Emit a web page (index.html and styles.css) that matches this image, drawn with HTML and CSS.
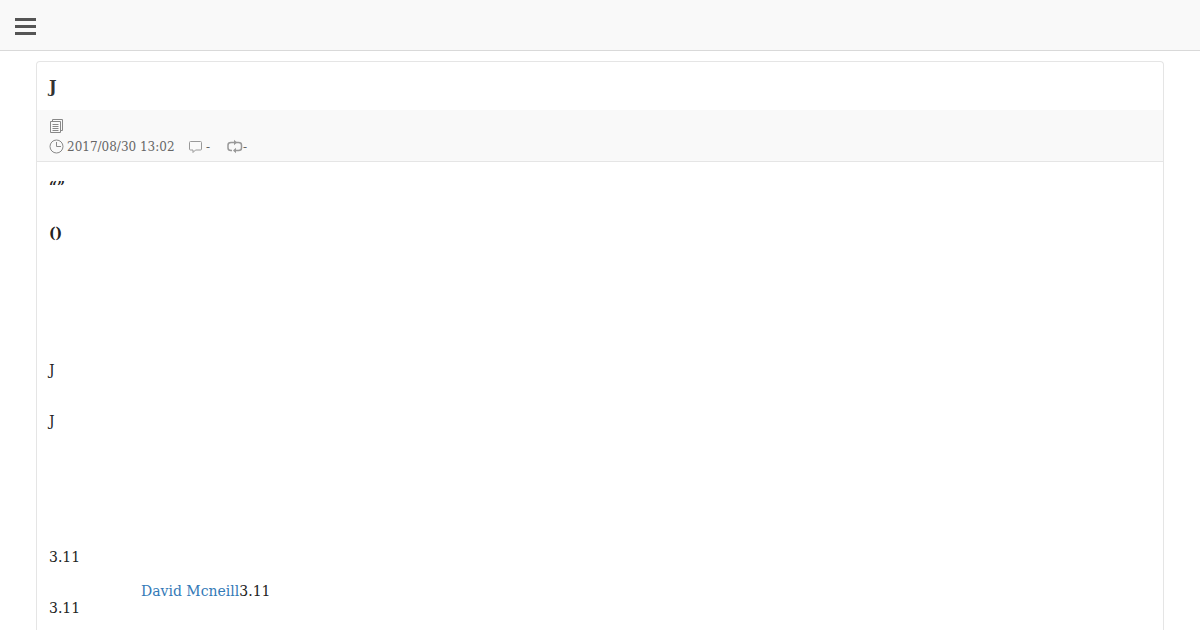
FILE: index.html
```
<!DOCTYPE html>
<html lang="ja">
<head>
  <meta charset="UTF-8" />
  <title>J</title>
  <link rel="stylesheet" href="styles.css">
</head>
<body>
  <header class="navbar">
    <button class="menu-btn" aria-label="Menu">
      <span></span>
      <span></span>
      <span></span>
    </button>
  </header>

  <article class="panel">
    <h1 class="title">J</h1>
    <div class="meta">
      <div class="meta-row">
        <svg width="15" height="16" viewBox="0 0 15 16">
          <path d="M3.500 3.500V1.500h10v11H11.500M1.500 3.500h10v11h-10zM3.500 6.500h6M3.500 8.500h6M3.500 10.500h6M3.500 12.500h6" />
        </svg>
      </div>
      <div class="meta-row">
        <svg width="15" height="16" viewBox="0 0 15 16">
          <circle cx="7.500" cy="8.500" r="6.500" />
          <path d="M7.500 4v4.500h4.500" />
        </svg>
        <span class="date">2017/08/30 13:02</span>
        <svg class="icon-comment" width="15" height="16" viewBox="0 0 15 16">
          <path d="M2.500 3.500h10q1 0 1 1v6.500q0 1-1 1H7.500L5 14.500V12H2.500q-1 0-1-1V4.500q0-1 1-1z" />
        </svg>
        <span class="comments">-</span>
        <svg class="icon-repost" width="16" height="16" viewBox="0 0 16 16">
          <path d="M5 12.500H4q-3 0-3-2.500V7q0-2.500 3-2.500h4M8 4.500h3.500q3 0 3 2.500v3q0 2.500-3 2.500H7M10.500 4.500h1" />
          <path class="arrow" d="M7 1.800v5.400L10 4.500zM9 9.800v5.400L6 12.500z" />
        </svg>
        <span>-</span>
      </div>
    </div>
    <div class="content">
      <h2 class="lead">“”</h2>
      <h2 class="lead">()</h2>
      <p class="intro">J</p>
      <p class="second">J</p>
      <p class="third">3.11</p>
      <p class="credit"><a href="#">David Mcneill</a>3.11</p>
      <p>3.11</p>
    </div>
  </article>
</body>
</html>
```
FILE: styles.css
```
* {
  box-sizing: border-box;
}
body {
  display: flex;
  flex-direction: column;
  min-height: 100vh;
  margin: 0;
  font-family: "DejaVu Serif", serif;
  font-size: 14px;
  line-height: 17px;
  color: #222;
  background: #fff;
}
.navbar {
  height: 51px;
  padding: 18px 15px;
  background: #f9f9f9;
  border-bottom: 1px solid #d9d9d9;
}
.menu-btn {
  display: flex;
  flex-direction: column;
  gap: 4px;
  width: 21px;
  padding: 0;
  border: none;
  background: none;
  cursor: pointer;
}
.menu-btn span {
  width: 21px;
  height: 3px;
  background: #555;
}

/* Article */
.panel {
  flex: 1;
  margin: 10px 36px 0;
  border: 1px solid #e5e5e5;
  border-bottom: none;
  border-radius: 4px 4px 0 0;
}
.title {
  height: 48px;
  margin: 0;
  padding: 14px 12px 0;
  font-size: 16px;
  line-height: 22px;
  color: #333;
}
.meta {
  height: 52px;
  padding: 6px 12px 0;
  font-size: 12px;
  line-height: 18px;
  color: #666;
  background: #f9f9f9;
  border-bottom: 1px solid #e5e5e5;
}
.meta-row {
  display: flex;
  align-items: center;
  height: 20px;
}
.meta-row span {
  padding-top: 2px;
}
.meta svg {
  fill: none;
  stroke: #888;
  stroke-width: 1;
}
.meta .icon-comment {
  stroke: #999;
}
.meta .icon-repost {
  stroke: #999;
  stroke-width: 1.5;
}
.icon-repost .arrow {
  fill: #999;
  stroke: none;
}
.date {
  width: 121px;
  margin-left: 3px;
}
.comments {
  width: 21px;
  margin-left: 3px;
}
.content {
  padding: 17px 12px 0;
}
.content p {
  margin: 0;
}
.lead {
  height: 17px;
  margin: 0 0 29px;
  font-size: 14px;
  line-height: 17px;
}
.content .intro {
  margin-top: 120px;
}
.content .second {
  margin-top: 34px;
}
.content .third {
  margin-top: 119px;
}
.content .credit {
  margin-top: 17px;
  padding-left: 92px;
}
.credit a {
  color: #337ab7;
  text-decoration: none;
}
```
